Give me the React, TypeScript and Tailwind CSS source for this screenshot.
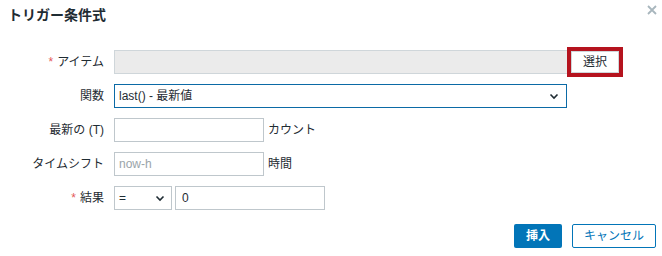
import React from "react";

const font = { fontFamily: '"Liberation Sans", Arial, "Noto Sans CJK JP", sans-serif' };

function Chevron() {
  return (
    <svg width="10" height="7" viewBox="0 0 10 7" className="shrink-0">
      <path d="M1.5 1.5 L5 5 L8.5 1.5" fill="none" stroke="#1f2c33" strokeWidth="1.6" />
    </svg>
  );
}

function Label({ text, req }: { text: string; req?: boolean }) {
  return (
    <div className="flex items-center justify-end h-[24px] text-[12px] text-[#1f2c33]">
      {req && <span className="text-[#e45959] mr-[4px]">*</span>}
      {text}
    </div>
  );
}

export default function App() {
  return (
    <div className="w-[662px] h-[256px] bg-white relative overflow-hidden" style={font}>
      <div className="flex items-start justify-between pl-[8px] pr-[5px] pt-[5px]">
        <h1 className="text-[14px] leading-[20px] font-bold text-[#1f2c33]">トリガー条件式</h1>
        <svg width="10" height="10" viewBox="0 0 10 10" className="mt-[0px]">
          <path d="M1 1 L9 9 M9 1 L1 9" stroke="#a8b6bd" strokeWidth="1.8" />
        </svg>
      </div>

      <div className="grid grid-cols-[104px_1fr] gap-x-[10px] gap-y-[10px] mt-[25px]">
        <Label text="アイテム" req />
        <div className="flex items-center">
          <div className="w-[454px] h-[24px] bg-[#ebebeb] border border-[#cfd6da]" />
          <div className="ml-[-1px] border-[4px] border-[#b5131e] -my-[4px]">
            <div className="w-[48px] h-[22px] bg-white border border-[#cfd6da] flex items-center justify-center text-[12px] text-[#1f2c33]">
              選択
            </div>
          </div>
        </div>

        <Label text="関数" />
        <div className="flex">
          <div className="w-[453px] h-[24px] border border-[#0b6aa6] flex items-center justify-between pl-[4px] pr-[7px] text-[12px] text-[#1f2c33]">
            <span>last() - 最新値</span>
            <Chevron />
          </div>
        </div>

        <Label text="最新の (T)" />
        <div className="flex items-center">
          <div className="w-[150px] h-[24px] border border-[#bfc7cc] bg-white" />
          <span className="ml-[4px] text-[12px] text-[#1f2c33]">カウント</span>
        </div>

        <Label text="タイムシフト" />
        <div className="flex items-center">
          <div className="w-[150px] h-[24px] border border-[#bfc7cc] bg-white flex items-center pl-[4px] text-[12px] text-[#9aa4aa]">
            now-h
          </div>
          <span className="ml-[4px] text-[12px] text-[#1f2c33]">時間</span>
        </div>

        <Label text="結果" req />
        <div className="flex items-center gap-[3px]">
          <div className="w-[58px] h-[24px] border border-[#bfc7cc] bg-white flex items-center justify-between pl-[4px] pr-[6px] text-[12px] text-[#1f2c33]">
            <span>=</span>
            <Chevron />
          </div>
          <div className="w-[150px] h-[24px] border border-[#bfc7cc] bg-white flex items-center pl-[6px] text-[12px] text-[#1f2c33]">
            0
          </div>
        </div>
      </div>

      <div className="flex justify-end gap-[10px] pr-[6px] mt-[14px]">
        <button className="w-[48px] h-[24px] rounded-[2px] bg-[#0275b8] text-white text-[12px] font-bold">挿入</button>
        <button className="w-[84px] h-[24px] rounded-[2px] border border-[#0275b8] bg-white text-[#0275b8] text-[12px]">キャンセル</button>
      </div>
    </div>
  );
}
